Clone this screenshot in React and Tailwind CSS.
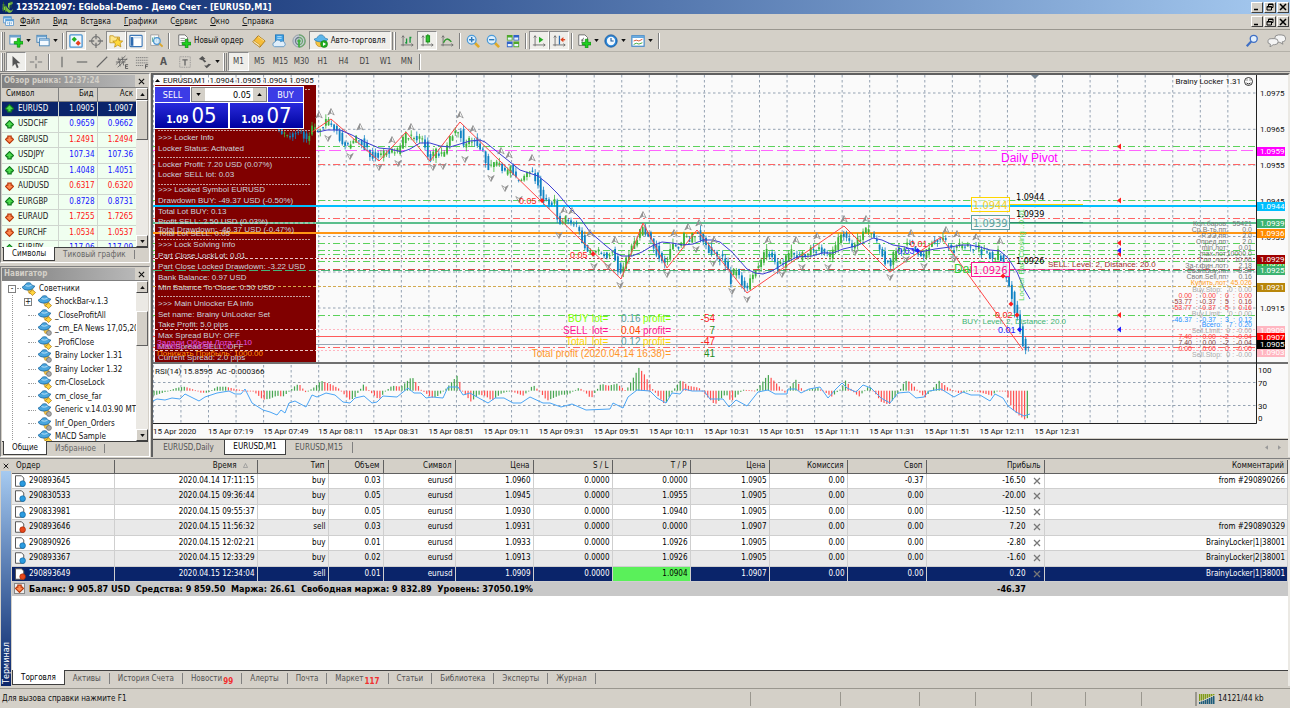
import { useState } from "react";

const quotes = [
  ["EURUSD", "1.0905", "1.0907", true],
  ["USDCHF", "0.9659", "0.9662", true],
  ["GBPUSD", "1.2491", "1.2494", false],
  ["USDJPY", "107.34", "107.36", true],
  ["USDCAD", "1.4048", "1.4051", true],
  ["AUDUSD", "0.6317", "0.6320", false],
  ["EURGBP", "0.8728", "0.8731", true],
  ["EURAUD", "1.7255", "1.7265", false],
  ["EURCHF", "1.0534", "1.0537", false],
  ["EURJPY", "117.06", "117.09", true],
];

const experts = [
  ["ShockBar-v.1.3", true],
  ["_CloseProfitAll", true],
  ["_cm_EA News 17,05,2016", false],
  ["_ProfiClose", true],
  ["Brainy Locker 1.31", false],
  ["Brainy Locker 1.32", false],
  ["cm-CloseLock", true],
  ["cm_close_far", true],
  ["Generic v.14.03.90 MTF", false],
  ["Inf_Open_Orders", false],
  ["MACD Sample", true],
];

const orders = [
  ["290893645", "2020.04.14 17:11:15", "buy", "0.03", "eurusd", "1.0960", "0.0000", "0.0000", "1.0905", "0.00", "-0.37", "-16.50", "from #290890266"],
  ["290830533", "2020.04.15 09:36:44", "buy", "0.05", "eurusd", "1.0945", "0.0000", "1.0955", "1.0905", "0.00", "0.00", "-20.00", ""],
  ["290833981", "2020.04.15 09:55:37", "buy", "0.05", "eurusd", "1.0930", "0.0000", "1.0940", "1.0905", "0.00", "0.00", "-12.50", ""],
  ["290893646", "2020.04.15 11:56:32", "sell", "0.03", "eurusd", "1.0931", "0.0000", "0.0000", "1.0907", "0.00", "0.00", "7.20", "from #290890329"],
  ["290890926", "2020.04.15 12:02:21", "buy", "0.01", "eurusd", "1.0933", "0.0000", "1.0926", "1.0905", "0.00", "0.00", "-2.80", "BrainyLocker|1|38001"],
  ["290893367", "2020.04.15 12:33:29", "buy", "0.02", "eurusd", "1.0913", "0.0000", "1.0926", "1.0905", "0.00", "0.00", "-1.60", "BrainyLocker|2|38001"],
  ["290893649", "2020.04.15 12:34:04", "sell", "0.01", "eurusd", "1.0909", "0.0000", "1.0904", "1.0907", "0.00", "0.00", "0.20", "BrainyLocker|1|38001"],
];

const columns = [
  ["Ордер", "w-[102px]"],
  ["Время", "w-[143px]"],
  ["Тип", "w-[71px]"],
  ["Объем", "w-[55px]"],
  ["Символ", "w-[72px]"],
  ["Цена", "w-[78px]"],
  ["S / L", "w-[79px]"],
  ["T / P", "w-[78px]"],
  ["Цена", "w-[79px]"],
  ["Комиссия", "w-[78px]"],
  ["Своп", "w-[79px]"],
  ["Прибыль", "w-[118px]"],
  ["Комментарий", ""],
];

const terminalTabs = [
  ["Торговля"],
  ["Активы"],
  ["История Счета"],
  ["Новости", "99"],
  ["Алерты"],
  ["Почта"],
  ["Маркет", "117"],
  ["Статьи"],
  ["Библиотека"],
  ["Эксперты"],
  ["Журнал"],
];

/* ---------- icons ---------- */

function Icon({ children, className = "size-[14px]" }) {
  return (
    <svg viewBox="0 0 16 16" className={`${className} shrink-0`} fill="none" aria-hidden="true">
      {children}
    </svg>
  );
}

const Plus = ({ x = 6, y = 6 }) => (
  <path
    transform={`translate(${x} ${y})`}
    d="M3.5 0h3v3.5H10v3H6.5V10h-3V6.5H0v-3h3.5z"
    fill="#1fcf1f"
    stroke="#0b8a0b"
    strokeWidth=".8"
  />
);

const Axes = () => (
  <path d="M3.5 2v12M1 12.5h14M2 4l1.5-2L5 4M13 11l2 1.5-2 1.5" stroke="#6b6b6b" />
);

const icons = {
  newChart: (
    <>
      <rect x="1" y="1.5" width="12" height="10" fill="#fff" stroke="#4b86b8" />
      <path d="M1 3h12" stroke="#6da3cf" strokeWidth="2" />
      <Plus x={6} y={5} />
    </>
  ),
  profiles: (
    <>
      <rect x="1" y="1.5" width="11" height="8" fill="#dcecf8" stroke="#4380b4" />
      <rect x="4" y="5.5" width="11" height="8" fill="#f4faff" stroke="#4380b4" />
      <path d="M4 7h11M1 3h11" stroke="#6da3cf" strokeWidth="1.5" />
    </>
  ),
  market: (
    <>
      <rect x="1" y="1" width="14" height="14" rx="1" fill="#eef7ff" stroke="#4a93d0" strokeWidth="1.5" />
      <path d="M6 3 9 6 6 9 3 6z" fill="#20b020" />
      <path d="M10.5 7.5 13.5 10.5 10.5 13.5 7.5 10.5z" fill="#e8401c" />
    </>
  ),
  target: (
    <>
      <circle cx="8" cy="8" r="5" stroke="#777" strokeWidth="1.5" />
      <path d="M8 0v6M8 10v6M0 8h6M10 8h6" stroke="#777" strokeWidth="1.5" />
    </>
  ),
  favorite: (
    <>
      <path d="M1 2h4l1 1.5h6V10H1z" fill="#ffe78a" stroke="#c79a2a" />
      <path d="m10 4 1.700 3.700 4 .4-3 2.700.9 4-3.600-2.100L6.400 15l.9-4-3-2.800 4-.4z" fill="#ffd83a" stroke="#b8860b" strokeWidth=".8" />
    </>
  ),
  panel: (
    <>
      <rect x="1" y="1.5" width="14" height="13" rx="1" fill="#fff" stroke="#3d78b8" strokeWidth="1.3" />
      <path d="M3.5 3.5v10" stroke="#2d6bb0" strokeWidth="3" />
      <path d="M5 4h9" stroke="#c9dcef" strokeWidth="2" />
    </>
  ),
  tester: (
    <>
      <path d="M2 1h9v12H2z" fill="#fff" stroke="#999" />
      <path d="M4 4v5M6 3v7M8.5 5v4" stroke="#5a9" />
      <circle cx="9" cy="8" r="3.8" fill="#cfe8fb" fillOpacity=".8" stroke="#4a93d0" strokeWidth="1.3" />
      <path d="m12 11 3.5 3.5" stroke="#d9a52b" strokeWidth="2.2" />
    </>
  ),
  order: (
    <>
      <path d="M2 1h7l3 3v9H2z" fill="#fff" stroke="#666" />
      <path d="M4 5h5M4 7.5h5M4 10h3" stroke="#888" />
      <Plus x={6} y={6} />
    </>
  ),
  book: (
    <>
      <path d="m1 9 6-7 8 6-6 7z" fill="#f6bd3a" stroke="#a87310" />
      <path d="m1 9 8 6v-2.5L2 7.5z" fill="#fff1c0" stroke="#a87310" strokeWidth=".6" />
      <path d="m7 3 7 5" stroke="#ffe08a" />
    </>
  ),
  cloud: (
    <>
      <rect x="4" y="1" width="9" height="8" fill="#3fa2e6" stroke="#1f78bb" />
      <path d="M6 3h5M6 5h5" stroke="#bfe2fa" />
      <path d="M3 14.5a2.7 2.7 0 0 1 .4-5.3 3.5 3.5 0 0 1 6.4-.4 2.9 2.9 0 0 1 3.7 5.7z" fill="#dfeefa" stroke="#5c93c0" />
    </>
  ),
  signal: (
    <>
      <circle cx="8" cy="8" r="7" fill="#c4ccd4" stroke="#8a96a2" />
      <path d="M8 4a4 4 0 1 0 0 8" stroke="#6c7a89" strokeWidth="1.5" />
      <path d="M8 1a7 7 0 1 1 0 14M8 4a4 4 0 0 1 0 8" stroke="#6fa66f" strokeWidth="1.5" />
      <circle cx="8" cy="8" r="2" fill="#3fae3f" />
      <path d="M8 8v7" stroke="#3fae3f" strokeWidth="2" />
    </>
  ),
  auto: (
    <>
      <ellipse cx="7" cy="9.5" rx="5" ry="5" fill="#f4c542" stroke="#a87310" strokeWidth=".6" />
      <path d="M0 6c2-1 3-1 4-2 1-4 7-4 8 0 1 1 2 1 4 2-3 4-13 4-16 0z" fill="#5cb6ea" stroke="#2277b0" strokeWidth=".8" />
      <circle cx="11.5" cy="11.5" r="4" fill="#22ad22" stroke="#0b7a0b" strokeWidth=".6" />
      <path d="m10.3 9.3 3.4 2.2-3.4 2.2z" fill="#fff" />
    </>
  ),
  bars: (
    <>
      <Axes />
      <path d="M7.5 5v6M11.5 3v7M6 10h1.5M11.5 4H13" stroke="#16963a" strokeWidth="1.5" />
    </>
  ),
  candles: (
    <>
      <Axes />
      <path d="M9 0v11" stroke="#0d8a0d" />
      <rect x="7" y="2" width="4" height="7" fill="#2fc02f" stroke="#0d8a0d" />
    </>
  ),
  line: (
    <>
      <Axes />
      <path d="M4 10c2-5 5-6 9-1" stroke="#2b962b" strokeWidth="1.5" />
    </>
  ),
  zoomIn: (
    <>
      <path d="m10 10 5 5" stroke="#e0aa28" strokeWidth="3" />
      <circle cx="6.5" cy="6.5" r="5" fill="#dff0fd" stroke="#4d9bd8" strokeWidth="1.5" />
      <path d="M3.5 6.5h6M6.5 3.5v6" stroke="#2b78ba" strokeWidth="1.6" />
    </>
  ),
  zoomOut: (
    <>
      <path d="m10 10 5 5" stroke="#e0aa28" strokeWidth="3" />
      <circle cx="6.5" cy="6.5" r="5" fill="#dff0fd" stroke="#4d9bd8" strokeWidth="1.5" />
      <path d="M3.5 6.5h6" stroke="#2b78ba" strokeWidth="1.6" />
    </>
  ),
  tiles: (
    <>
      <path d="M1 1h6.5v6.5H1zM8.5 8.5H15V15H8.5z" fill="#4fa82a" />
      <path d="M8.5 1H15v6.5H8.5zM1 8.5h6.5V15H1z" fill="#2f62c8" />
      <path d="M2 4h4.5v2.5H2zM9.5 4H14v2.5H9.5zM2 11.5h4.5V14H2zM9.5 11.5H14V14H9.5z" fill="#e9f4ff" />
    </>
  ),
  scroll: (
    <>
      <Axes />
      <path d="m8 3 5 3.5L8 10z" fill="#22ad22" />
    </>
  ),
  shift: (
    <>
      <Axes />
      <path d="M8.5 2v10" stroke="#2b6cb0" strokeWidth="1.4" />
      <path d="M9.5 6.5 13 3.5v6z" fill="#e0401c" />
      <path d="M12 6.5h3" stroke="#e0401c" strokeWidth="1.5" />
    </>
  ),
  indicators: (
    <>
      <path d="M2 1h7l3 3v9H2z" fill="#fff" stroke="#666" />
      <path d="M5 10c1 1 1-6 3-5M4.5 7h3" stroke="#555" />
      <Plus x={6} y={6} />
    </>
  ),
  clock: (
    <>
      <circle cx="8" cy="8" r="7" fill="#2a86d8" stroke="#14559a" />
      <circle cx="8" cy="8" r="4.8" fill="#f2f9ff" />
      <path d="M8 4.5V8h3" stroke="#14559a" strokeWidth="1.2" />
    </>
  ),
  template: (
    <>
      <rect x="1" y="2" width="14" height="12" fill="#fff" stroke="#3d86c8" strokeWidth="1.3" />
      <path d="M1 3.5h14" stroke="#5aa2dc" strokeWidth="2" />
      <path d="m3 8 3-1 3 1 4-2" stroke="#d04020" />
      <path d="m3 12 3-1.5 3 1 4-1.5" stroke="#2ca02c" />
    </>
  ),
  cursor: <path d="M4 1v12l3-3 2 5 2-1-2-4.5h4z" fill="#555" />,
  cross: <path d="M8 1v5M8 10v5M1 8h5M10 8h5" stroke="#777" strokeWidth="1.3" />,
  vline: <path d="M8 2v12" stroke="#666" strokeWidth="1.3" />,
  hline: <path d="M2 8h12" stroke="#666" strokeWidth="1.3" />,
  trend: <path d="M2 14 14 2" stroke="#666" strokeWidth="1.3" />,
  channel: (
    <>
      <path d="M1 11 12 1M3 14 14 4M1 8h11M3 5h11M4 3l2 10M8 2l2 10" stroke="#666" />
      <path d="M12 11h3M12 11v4.5h3M12 13h2.5" stroke="#555" />
    </>
  ),
  fibo: (
    <>
      <path d="M1 3h14M1 6h14M1 9h14M1 12h9" stroke="#777" strokeDasharray="1.5 .7" />
      <path d="M12 11h3M12 11v4.5M12 13h2.5" stroke="#555" />
    </>
  ),
  label: (
    <>
      <rect x="2" y="2" width="12" height="12" stroke="#888" strokeDasharray="1 1" />
      <path d="M5 5.5h6M8 5.5V12" stroke="#666" strokeWidth="1.5" />
    </>
  ),
  arrows: (
    <>
      <path d="M5 1 8.5 4.5h-2l3 3-2 1-3-3V6L1 4.5z" fill="#555" />
      <path d="m7 12 3 3 5-4.5-3-.5-2 2z" fill="#555" />
    </>
  ),
  mdi: (
    <>
      <rect x="1" y="1" width="11" height="9" fill="#e6f3ff" stroke="#3d86c8" />
      <rect x="4" y="5" width="11" height="9" fill="#fff" stroke="#3d86c8" />
      <path d="M4 6.5h11M1 2.5h11" stroke="#5aa2dc" strokeWidth="2" />
      <path d="M7 9v3M9.5 8.5V13M12 9v3" stroke="#3d86c8" />
    </>
  ),
  logo: (
    <>
      <path d="M1 9c4-4 6 0 8 2 3 3 4 2 6-1-1 5-4 7-7 5-3-3-4-4-7-2z" fill="#7fc241" />
      <path d="M1 4h2v7H1zM4 7h2v7H4zM8 8V3l6-2v3l-4 2v5z" fill="#8fd14f" />
      <path d="M2 1v13M5 5v10M12 0v9" stroke="#2a6a1c" />
    </>
  ),
  search: (
    <>
      <circle cx="10" cy="5.5" r="4" fill="#e2effc" stroke="#3f6fc4" strokeWidth="1.5" />
      <path d="M7 8.5 2 14" stroke="#3f6fc4" strokeWidth="2.5" />
    </>
  ),
};

const Caret = () => (
  <svg viewBox="0 0 6 4" className="h-[3px] w-[5px]" aria-hidden="true">
    <path d="M0 0h6L3 4z" fill="currentColor" />
  </svg>
);

const Quote = ({ up }) => (
  <Icon className="size-[9px]">
    {up ? (
      <path d="M8 1 15 8l-2 2.5h-2V14H5v-3.5H3L1 8z" fill="#4fdc4f" stroke="#0d7a1c" strokeWidth="2" />
    ) : (
      <path d="M8 15 1 8l2-2.5h2V2h6v3.5h2L15 8z" fill="#ff8a50" stroke="#b8380c" strokeWidth="2" />
    )}
  </Icon>
);

const ExpertIcon = ({ active = true }) => (
  <Icon>
    <path d="m6 8 6-1 1 5-5 1z" fill="#f4c542" stroke="#a87310" strokeWidth=".5" />
    <path d="M0 6c1.5-1 2.5-1.5 3.5-2.5C4.5 0 10 0 11 3c1 1 2 1.5 3.5 1.5C13 10 3 11 0 6z" fill="#4aa6de" stroke="#14609a" strokeWidth=".9" />
    <path d="M4 4c2 1 5 1 7-.5" stroke="#c9e8fb" />
    {active ? (
      <path d="m12 9 3.5 3-3.5 3.5L8.5 12z" fill="#ffd640" stroke="#a87310" strokeWidth=".8" />
    ) : (
      <circle cx="12.5" cy="12.5" r="2.8" fill="#aaa" stroke="#666" strokeWidth=".8" />
    )}
  </Icon>
);

const OrderIcon = ({ sell }) => (
  <Icon className="size-[12px]">
    <path d="M2 1h8l3 3v11H2z" fill="#fff" stroke="#555" strokeWidth="1.3" />
    <circle cx="11.5" cy="11.5" r="3.8" fill={sell ? "#e8481c" : "#2a9be0"} stroke={sell ? "#982400" : "#0f5f98"} strokeWidth=".8" />
  </Icon>
);

const CrossMark = ({ className = "size-[8px]" }) => (
  <Icon className={className}>
    <path d="m2 2 12 12M14 2 2 14" stroke="currentColor" strokeWidth="2.5" />
  </Icon>
);

/* ---------- toolbars ---------- */

const Sep = () => <span className="mx-[2px] h-[16px] w-[2px] shrink-0 border-l border-[#808080] border-r border-r-white" />;

const Handle = () => (
  <span className="mx-px flex h-[18px] w-[4px] shrink-0 gap-px">
    <i className="w-[2px] border-r border-[#808080] bg-white" />
    <i className="w-[2px] border-r border-[#808080] bg-white" />
  </span>
);

function Tool({ name, label, pressed, caret, text }) {
  return (
    <button
      type="button"
      aria-label={label}
      title={label}
      className={`flex h-[19px] shrink-0 items-center justify-center gap-[3px] border ${
        caret ? "w-[27px]" : text ? "px-[4px]" : "w-[20px]"
      } ${pressed ? "border-[#8a8a8a] border-r-white border-b-white bg-[#efeeea]" : "border-transparent"}`}
    >
      {name && <Icon>{icons[name]}</Icon>}
      {text && <span>{text}</span>}
      {caret && <Caret />}
    </button>
  );
}

function WindowButtons() {
  return (
    <div className="flex gap-px pr-px">
      {["Свернуть", "Восстановить", "Закрыть"].map((name, i) => (
        <button
          key={name}
          type="button"
          aria-label={name}
          className="flex h-[11px] w-[12px] items-center justify-center border border-white border-r-[#404040] border-b-[#404040] bg-[#d4d0c8] text-black"
        >
          <Icon className="size-[8px]">
            {i === 0 && <path d="M2 13h8" stroke="#000" strokeWidth="3" />}
            {i === 1 && <path d="M5 6V2h9v7h-3M5 3h9M2 7h9v7H2zM2 8h9" stroke="#000" strokeWidth="2" />}
            {i === 2 && <path d="m2 2 12 12M14 2 2 14" stroke="#000" strokeWidth="3" />}
          </Icon>
        </button>
      ))}
    </div>
  );
}

function MenuBar() {
  const menu = [
    ["", "Ф", "айл"],
    ["", "В", "ид"],
    ["Вст", "а", "вка"],
    ["", "Г", "рафики"],
    ["С", "е", "рвис"],
    ["", "О", "кно"],
    ["", "С", "правка"],
  ];
  return (
    <nav className="flex h-[16px] items-center border-b border-[#9a978f] pl-[3px]">
      <Icon className="size-[11px]">{icons.mdi}</Icon>
      <div className="flex flex-1 gap-[13px] pl-[6px]">
        {menu.map(([a, u, b]) => (
          <button key={a + u + b} type="button" className="leading-[12px]">
            {a}
            <u>{u}</u>
            {b}
          </button>
        ))}
      </div>
      <WindowButtons />
    </nav>
  );
}

function Toolbars() {
  const [frame, setFrame] = useState("M1");
  return (
    <div className="border-b border-[#808080]">
      <div className="flex h-[21px] items-center">
        <Handle />
        <Tool name="newChart" label="Новый график" caret />
        <Tool name="profiles" label="Профили" caret />
        <Sep />
        <Tool name="market" label="Обзор рынка" pressed />
        <Tool name="target" label="Окно данных" />
        <Tool name="favorite" label="Навигатор" pressed />
        <Tool name="panel" label="Терминал" pressed />
        <Tool name="tester" label="Тестер стратегий" />
        <Sep />
        <Tool name="order" text="Новый ордер" label="Новый ордер" />
        <Tool name="book" label="MetaEditor" />
        <Tool name="cloud" label="Облако" />
        <Tool name="signal" label="Сигналы" />
        <Tool name="auto" text="Авто-торговля" label="Авто-торговля" pressed />
        <Handle />
        <Tool name="bars" label="Бары" />
        <Tool name="candles" label="Свечи" pressed />
        <Tool name="line" label="Линия" />
        <Sep />
        <Tool name="zoomIn" label="Увеличить" />
        <Tool name="zoomOut" label="Уменьшить" />
        <Tool name="tiles" label="Окна мозаикой" />
        <Sep />
        <Tool name="scroll" label="Автопрокрутка" pressed />
        <Tool name="shift" label="Сдвиг графика" pressed />
        <Sep />
        <Tool name="indicators" label="Индикаторы" caret />
        <Tool name="clock" label="Периоды" caret />
        <Tool name="template" label="Шаблоны" caret />
        <Sep />
        <div className="flex flex-1 items-center justify-end gap-[8px] pr-[4px]">
          <button type="button" aria-label="Поиск">
            <Icon>{icons.search}</Icon>
          </button>
          <button type="button" aria-label="Чат">
            <svg viewBox="0 0 20 14" className="h-[13px] w-[19px]" fill="#f4f4f4" stroke="#888" aria-hidden="true">
              <path d="M12 1h3a4 3.5 0 0 1 1 7.5L17 11l-3.5-2H12a4 4 0 0 1 0-8z" />
              <path d="M5 5h3a3.5 3 0 0 1 0 6.5H6.5L3 14l.5-3A3.5 3 0 0 1 5 5z" />
            </svg>
          </button>
        </div>
      </div>
      <div className="flex h-[20px] items-center border-t border-[#b4b1a9]">
        <Handle />
        <Tool name="cursor" label="Курсор" pressed />
        <Tool name="cross" label="Перекрестие" />
        <Sep />
        <Tool name="vline" label="Вертикальная линия" />
        <Tool name="hline" label="Горизонтальная линия" />
        <Tool name="trend" label="Трендовая линия" />
        <Tool name="channel" label="Канал" />
        <Tool name="fibo" label="Фибоначчи" />
        <button type="button" className="w-[23px] text-[10px] font-bold text-[#555]">
          A
        </button>
        <Tool name="label" label="Текстовая метка" />
        <Tool name="arrows" label="Стрелки" caret />
        <Handle />
        {["M1", "M5", "M15", "M30", "H1", "H4", "D1", "W1", "MN"].map((f) => (
          <button
            key={f}
            type="button"
            onClick={() => setFrame(f)}
            className={`h-[19px] w-[21px] border text-[#444] ${
              f === frame ? "border-[#8a8a8a] border-r-white border-b-white bg-[#efeeea]" : "border-transparent"
            }`}
          >
            {f}
          </button>
        ))}
        <Sep />
      </div>
    </div>
  );
}

/* ---------- left panels ---------- */

function PanelTitle({ children }) {
  return (
    <div className="flex h-[12px] items-center justify-between">
      <h2 className="flex-1 bg-linear-to-r from-[#808080] to-[#b8b8b8] pl-[2px] leading-[12px] font-bold text-[#d4d0c8]">
        {children}
      </h2>
      <button type="button" aria-label="Закрыть" className="px-[3px]">
        <CrossMark className="size-[7px]" />
      </button>
    </div>
  );
}

function ScrollBar({ thumb }) {
  return (
    <div className="flex w-[12px] shrink-0 flex-col bg-[#ebe9e4]">
      <button type="button" aria-label="Вверх" className="flex h-[12px] items-center justify-center border border-white border-r-[#404040] border-b-[#404040] bg-[#d4d0c8]">
        <span className="rotate-180">
          <Caret />
        </span>
      </button>
      <div className="flex flex-1 flex-col">
        <div className={thumb} />
      </div>
      <button type="button" aria-label="Вниз" className="flex h-[12px] items-center justify-center border border-white border-r-[#404040] border-b-[#404040] bg-[#d4d0c8]">
        <Caret />
      </button>
    </div>
  );
}

function PanelTabs({ items }) {
  return (
    <div className="flex h-[14px] border-t border-[#404040] pl-px leading-[12px]">
      {items.map((t, i) => (
        <button
          key={t}
          type="button"
          className={
            i === 0
              ? "-mt-px border border-t-0 border-[#404040] bg-white px-[8px]"
              : "my-[2px] border-r border-[#808080] px-[8px] leading-[9px] text-[#666]"
          }
        >
          {t}
        </button>
      ))}
    </div>
  );
}

function MarketWatch() {
  return (
    <section className="border border-[#808080] border-r-white border-b-white p-px">
      <PanelTitle>Обзор рынка: 12:37:24</PanelTitle>
      <div className="flex h-[160px] overflow-hidden border-t border-[#808080] bg-white">
        <div className="flex-1 overflow-hidden">
          <table className="w-full table-fixed border-collapse text-right">
            <thead>
              <tr className="h-[13px] bg-[#d4d0c8]">
                <th className="w-[56px] border-r border-b border-[#808080] pl-[4px] text-left font-normal">Символ</th>
                <th className="border-r border-b border-[#808080] pr-[3px] font-normal">Бид</th>
                <th className="border-b border-[#808080] pr-[3px] font-normal">Аск</th>
              </tr>
            </thead>
            <tbody>
              {quotes.map(([name, bid, ask, up], i) => (
                <tr
                  key={name}
                  className={`odd:h-[15px] even:h-[16px] ${
                    i === 0 ? "bg-[#0a246a] text-white" : up ? "bg-[#f0fff0] text-[#1414ff]" : "bg-[#f0fff0] text-[#ff1414]"
                  }`}
                >
                  <td className={`border-r border-b border-[#cfd6cf] pl-[3px] text-left ${i === 0 ? "" : "text-[#202020]"}`}>
                    <span className="flex items-center gap-[4px]">
                      <Quote up={up} />
                      {name}
                    </span>
                  </td>
                  <td className="border-r border-b border-[#cfd6cf] pr-[2px]">{bid}</td>
                  <td className="border-b border-[#cfd6cf] pr-[3px]">{ask}</td>
                </tr>
              ))}
            </tbody>
          </table>
        </div>
        <ScrollBar thumb="h-[40px] border border-white border-r-[#606060] border-b-[#606060] bg-[#d4d0c8]" />
      </div>
      <PanelTabs items={["Символы", "Тиковый график"]} />
    </section>
  );
}

function Navigator() {
  return (
    <section className="border border-[#808080] border-r-white border-b-white p-px">
      <PanelTitle>Навигатор</PanelTitle>
      <div className="flex h-[161px] overflow-hidden border-t border-[#808080] bg-white">
        <div className="flex-1 overflow-hidden pt-px pl-[6px] whitespace-nowrap">
          <div className="flex h-[13px] items-center">
            <span className="flex size-[8px] items-center justify-center border border-[#808080] leading-none">-</span>
            <span className="mx-px w-[4px] border-t border-dotted border-[#999]" />
            <ExpertIcon />
            <span className="pl-[3px]">Советники</span>
          </div>
          <ul className="ml-[4px] border-l border-dotted border-[#999] pl-[11px]">
            {experts.map(([name, active], i) => (
              <li key={name} className="flex items-center odd:h-[14px] even:h-[13px]">
                <span className="w-[14px] shrink-0">
                  {i === 0 ? (
                    <span className="flex size-[8px] items-center justify-center border border-[#808080] leading-none">+</span>
                  ) : (
                    <span className="ml-[4px] block w-[8px] border-t border-dotted border-[#999]" />
                  )}
                </span>
                <ExpertIcon active={active} />
                <span className="pl-[3px]">{name}</span>
              </li>
            ))}
          </ul>
        </div>
        <ScrollBar thumb="mt-[18px] h-[35px] border border-white border-r-[#606060] border-b-[#606060] bg-[#d4d0c8]" />
      </div>
      <PanelTabs items={["Общие", "Избранное"]} />
    </section>
  );
}

/* ---------- chart ---------- */

const STEP = 2.755;

const pricePath = [
  [279, 128], [285, 134], [300, 132], [307, 140], [312, 130], [318, 129], [330, 121], [338, 133], [348, 148],
  [360, 137], [370, 153], [379, 158], [390, 150], [398, 153], [407, 135], [417, 139], [424, 141], [430, 158],
  [437, 153], [443, 155], [448, 143], [457, 127], [461, 130], [464, 150], [473, 138], [483, 150], [490, 168],
  [497, 160], [505, 175], [510, 167], [519, 182], [532, 170], [538, 180], [543, 200], [556, 203], [558, 223],
  [565, 220], [573, 223], [580, 230], [587, 253], [600, 252], [607, 257], [613, 250], [620, 271], [622, 276],
  [627, 257], [637, 240], [643, 227], [650, 235], [657, 250], [666, 265], [673, 243], [680, 248], [685, 235],
  [690, 240], [698, 232], [703, 238], [710, 252], [725, 260], [732, 281], [736, 268], [747, 288], [753, 275],
  [768, 250], [778, 265], [783, 265], [792, 252], [800, 258], [817, 247], [828, 258], [835, 250], [843, 232],
  [852, 247], [860, 240], [865, 230], [873, 235], [883, 255], [890, 266], [897, 252], [910, 243], [923, 257],
  [932, 243], [942, 240], [950, 247], [953, 252], [958, 245], [965, 247], [977, 247], [990, 255], [995, 260],
  [1000, 252], [1005, 267], [1008, 283], [1013, 297], [1018, 317], [1021, 333], [1024, 347], [1030, 347],
];

// AC histogram heights, positive is above zero
const acPath = [
  [153, -5], [157, -4], [166, -1], [177, 3], [185, 4], [194, 1], [201, -2], [208, -2], [217, 4], [226, 4], [234, 2],
  [245, 0], [254, -1], [263, -9], [270, -8], [277, -5], [283, -6], [289, -1], [294, 4], [299, 7], [306, -2],
  [315, 4], [321, 10], [332, 6], [339, 2], [349, -9], [354, -8], [364, 7], [370, -1], [379, -9], [385, -1],
  [392, 5], [401, 4], [412, 14], [421, 1], [432, -7], [437, -6], [446, 2], [458, 16], [462, 0], [471, -11],
  [479, -4], [485, -5], [492, -10], [501, -3], [510, 0], [523, -5], [528, -1], [533, 6], [539, 0], [547, -10],
  [561, -4], [568, -4], [579, 3], [584, 0], [591, -8], [601, 7], [608, 5], [617, 7], [626, 0], [639, 23],
  [644, 17], [653, 1], [665, -14], [673, 0], [681, 11], [688, 5], [699, 3], [707, -6], [715, -14], [726, -3],
  [731, -11], [738, -4], [743, 1], [756, 0], [768, 16], [775, 9], [785, -2], [796, 11], [803, 0], [818, 3],
  [832, -6], [841, 2], [846, 11], [852, 0], [859, -6], [869, 5], [874, -1], [881, -11], [889, -14], [898, -3],
  [905, 10], [910, 9], [918, 0], [925, -7], [931, 0], [939, 10], [948, 3], [960, -3], [971, 1], [992, -5],
  [997, 0], [1006, -1], [1012, -18], [1018, -24], [1025, -29], [1028, -27], [1030, -21],
];

const rsi =
  "153,401 157,399 165,400 172,398 180,399 185,394 191,397 199,401 205,397 217,393 229,391 235,394 241,394 245,389 252,403 263,410 270,412 277,415 281,410 285,413 289,403 295,401 306,407 312,395 317,397 326,393 335,395 343,402 350,403 355,398 364,396 372,403 377,402 383,396 397,397 408,388 414,393 421,393 426,398 432,397 443,398 448,387 458,387 463,395 470,393 477,397 488,403 495,398 504,398 513,403 521,403 530,397 543,403 550,403 561,407 572,404 586,410 610,409 613,403 623,408 628,397 637,390 650,391 657,398 666,403 672,393 680,394 684,389 692,391 704,391 710,399 723,399 729,407 736,400 747,406 758,392 768,390 775,394 787,394 788,389 796,389 801,393 809,389 820,387 828,398 835,390 842,383 847,388 856,392 863,385 871,388 881,398 890,403 898,393 909,392 916,398 924,397 929,391 941,389 954,397 963,392 971,395 980,395 990,401 995,394 1003,398 1008,406 1016,412 1024,416 1030,414";

const zigzag =
  "312,132 331,119 379,161 406,132 430,161 460,122 621,279 643,223 667,268 697,230 747,293 844,226 890,272 941,237 1023,350";

const average =
  "318,132 327,130 340,130 352,135 365,142 379,148 390,149 402,152 410,149 420,143 430,143 440,146 450,147 460,144 470,141 480,140 485,142 495,150 510,162 520,170 538,176 548,184 558,194 568,206 580,218 590,232 605,245 615,253 622,256 632,256 642,252 652,246 662,242 672,243 683,245 693,244 703,240 712,240 720,242 732,252 747,269 755,273 763,274 772,271 785,263 797,257 812,256 822,253 833,253 843,249 856,246 865,242 873,238 882,240 893,245 905,247 920,252 935,249 950,247 962,245 970,245 980,247 990,250 1000,251 1008,258 1017,272 1024,289 1030,299";

const upArrows = [
  [319, 115], [331, 112], [360, 127], [392, 140], [411, 127], [460, 115], [473, 129], [501, 151], [509, 155],
  [532, 158], [564, 210], [572, 211], [590, 233], [615, 240], [643, 215], [674, 233], [688, 227], [699, 223],
  [714, 240], [768, 240], [796, 240], [817, 236], [844, 219], [866, 219], [911, 233], [946, 230], [957, 234],
  [976, 237], [1000, 241],
];

const downArrows = [
  [328, 138], [350, 156], [379, 167], [398, 163], [433, 167], [443, 166], [465, 159], [491, 178], [505, 188],
  [519, 199], [559, 235], [594, 266], [608, 266], [620, 285], [667, 274], [696, 249], [713, 263], [732, 291],
  [747, 299], [782, 274], [802, 267], [828, 267], [855, 252], [890, 277], [906, 259], [924, 266], [954, 259],
];

const DASH_DOT = "7 3 2 3";

// y, colour, dash pattern, thickness
const orderLevels = [
  [146.5, "#5ad25a", DASH_DOT, 1],
  [150.5, "#ff64ff", "12 4", 1],
  [164.5, "#ff6464", DASH_DOT, 1],
  [200.5, "#5ad25a", DASH_DOT, 1],
  [218.5, "#ff6464", DASH_DOT, 1],
  [243.5, "#5ad25a", DASH_DOT, 1],
  [250.5, "#5ad25a", DASH_DOT, 1],
  [254.5, "#5ad25a", DASH_DOT, 1],
  [258.5, "#b43c3c", "2 2", 1],
  [261.5, "#5ad25a", DASH_DOT, 1],
  [269.5, "#d24646", DASH_DOT, 1],
  [315.5, "#5ad25a", DASH_DOT, 1],
  [329.5, "#ffb6c1", "2 2", 1],
  [336.5, "#ff5a5a", null, 1],
  [344.5, "#98a6b4", null, 1],
  [347.5, "#ff6464", DASH_DOT, 1],
  [350.5, "#ffb6c1", "2 2", 1],
];

const mainLevels = [
  [206, "#00bfff", null, 2],
  [223, "#5abe8c", null, 2],
  [233, "#ff9614", null, 2],
  [270.5, "#46b478", "9 3", 1],
  [286.5, "#d2aa50", "3 2", 1],
];

const tags = [
  [151, "1.0959", "#ff00ff"],
  [206, "1.0944", "#00bfff"],
  [223, "1.0939", "#3cb371"],
  [233, "1.0936", "#ff8c00"],
  [265, "1.0930", "#32b432"],
  [259, "1.0929", "#a00000"],
  [270, "1.0925", "#3cb371"],
  [287, "1.0921", "#b8860b"],
  [330, "1.0909", "#ffb6c1"],
  [352, "1.0903", "#ffb6c1"],
  [337, "1.0907", "#ff0000"],
  [344, "1.0905", "#000000"],
];

const lockerLines = [
  [137, ">>> Locker Info"],
  [148, "Locker Status: Activated"],
  [164, "Locker Profit: 7.20 USD (0.07%)"],
  [174, "Locker SELL lot: 0.03"],
  [189, ">>> Locked Symbol EURUSD"],
  [200, "Drawdown BUY: -49.37 USD (-0.50%)"],
  [211, "Total Lot BUY: 0.13"],
  [221, "Profit SELL: 2.50 USD (0.03%)"],
  [229, "Total Drawdown: -46.37 USD (-0.47%)"],
  [233, "Total Lot SELL: 0.05"],
  [244, ">>> Lock Solving Info"],
  [255, "Part Close LockLot: 0.01"],
  [266, "Part Close Locked Drawdown: -3.22 USD"],
  [277, "Bank Balance: 0.97 USD"],
  [287, "Min Balance To Close: 0.50 USD"],
  [303, ">>> Main Unlocker EA Info"],
  [314, "Set name: Brainy UnLocker Set"],
  [324, "Take Profit: 5.0 pips"],
  [335, "Max Spread BUY: OFF"],
  [346, "Max Spread SELL: OFF"],
  [357, "Current Spread: 2.0 pips"],
];

const info = [
  [223, "#777", ["Кол.баров:", "55421"]],
  [229, "#777", ["Ср.В-ть,пп:", "0.0"]],
  [235, "#777", ["Р.ЭЭ,пп:", "2.0"]],
  [241, "#777", ["Спред,пп:", "2.0"]],
  [247, "#777", ["min.лот:", "0.01"]],
  [253, "#777", ["max.лот:", "10000.0"]],
  [259, "#777", ["Т.пп.,лот:", "10.00"]],
  [265, "#777", ["За-г.фин.лот:", "2.18"]],
  [270, "#777", ["Своп.Buy,пп:", "-0.34"]],
  [276, "#777", ["Своп.Sell,пп:", "0.16"]],
  [282, "#ffa01e", ["Купить,лот:", "45.026"]],
  [289, "#aaa", ["Buy.Stop:", "0 : 0.00"]],
  [295, "#ff3c3c", ["0.00", ":", "0.00", ":", "0", ":", "0.00"]],
  [301, "#a03c3c", ["-53.77", ":", "-0.37", ":", "5", ":", "0.16"]],
  [307, "#ff3c3c", ["-53.77", ":", "-0.37", ":", "5", ":", "0.16"]],
  [313, "#aaa", ["Buy.Limit:", "0 : 0.00"]],
  [319, "#1e90ff", ["-46.37", ":", "-0.37", ":", "3", ":", "0.12"]],
  [324, "#1e90ff", ["Всего:", "7 : 0.20"]],
  [330, "#aaa", ["Sell.Limit:", "0 : -0.00"]],
  [336, "#ff3c3c", ["7.40", ":", "0.00", ":", "-2", ":", "-0.04"]],
  [342, "#803c3c", ["7.40", ":", "0.00", ":", "-2", ":", "-0.04"]],
  [348, "#ff3c3c", ["0.00", ":", "0.00", ":", "0", ":", "-0.00"]],
  [354, "#aaa", ["Sell.Stop:", "0 : -0.00"]],
];

const times = [
  "15 Apr 2020", "15 Apr 07:19", "15 Apr 07:49", "15 Apr 08:11", "15 Apr 08:31", "15 Apr 08:51", "15 Apr 09:11",
  "15 Apr 09:31", "15 Apr 09:51", "15 Apr 10:11", "15 Apr 10:31", "15 Apr 10:51", "15 Apr 11:11", "15 Apr 11:31",
  "15 Apr 11:51", "15 Apr 12:11", "15 Apr 12:31",
];

function sample(points, x) {
  const i = points.findIndex((p) => p[0] >= x);
  if (i <= 0) return points[i === 0 ? 0 : points.length - 1][1];
  const [x0, y0] = points[i - 1];
  const [x1, y1] = points[i];
  return y0 + ((y1 - y0) * (x - x0)) / (x1 - x0);
}

// stable pseudo random in 0..1
const noise = (n) => {
  const s = Math.sin(n * 127.1) * 43758.5453;
  return s - Math.floor(s);
};

const candles = [];
for (let x = 279, n = 0; x <= 1030; x += STEP, n++) {
  const open = sample(pricePath, x - STEP) + (noise(n) - 0.5) * 6;
  const close = sample(pricePath, x + STEP / 2) + (noise(n + 0.5) - 0.5) * 9;
  const top = Math.min(open, close);
  const bottom = Math.max(open, close, top + 1);
  candles.push({
    x,
    top,
    bottom,
    high: top - noise(n + 7) * 5,
    low: bottom + noise(n + 9) * 5,
    up: close < open,
  });
}

const acBars = [];
for (let x = 154; x <= 1030; x += STEP) {
  const h = sample(acPath, x);
  acBars.push({ x, h, up: h >= sample(acPath, x - STEP) });
}

const Levels = ({ items }) => (
  <g fill="none">
    {items.map(([y, color, dash, w]) => (
      <path key={y} d={`M153 ${y}H1256`} stroke={color} strokeDasharray={dash ?? "none"} strokeWidth={w} />
    ))}
  </g>
);

function PriceChart() {
  const grid = Array.from({ length: 40 }, (_, i) => 153.4 + i * 27.55);
  return (
    <svg
      viewBox="153 75 1135 363"
      className="block w-full font-[Roboto,'DejaVu_Sans',sans-serif] text-[8px]"
      role="img"
      aria-label="EURUSD,M1"
    >
      <rect x="153" y="75" width="1135" height="363" fill="#fafafa" />

      <g stroke="#94a2b2" strokeDasharray="2.5 2.5">
        {grid.map((x) => (
          <path key={x} d={`M${x} 75V423`} />
        ))}
        {[93, 129.3, 165, 200.5, 236.5, 272, 308, 382.5, 405.5].map((y) => (
          <path key={y} d={`M153 ${y}H1256`} />
        ))}
      </g>

      <Levels items={orderLevels} />
      <rect x="155" y="85" width="161" height="277" fill="#800000" />
      <Levels items={mainLevels} />
      <path d="M155 223h161M155 258.5h161M155 329.5h161M155 350.5h161" stroke="#e8c8c8" strokeDasharray="3 2" />

      <g>
        {candles.map((c) => (
          <g key={c.x} fill={c.up ? "#3cb43c" : "#0f82c3"} stroke={c.up ? "#3cb43c" : "#0f82c3"}>
            <path d={`M${c.x} ${c.high}V${c.low}`} strokeWidth=".8" />
            <rect x={c.x - 0.9} y={c.top} width="1.8" height={c.bottom - c.top} stroke="none" />
          </g>
        ))}
      </g>

      <polyline points={zigzag} fill="none" stroke="#ff4646" />
      <polyline points={average} fill="none" stroke="#3c3cd2" />

      <g fill="none" stroke="#909090" strokeWidth=".8">
        {upArrows.map(([x, y]) => (
          <g key={x}>
            <path d={`M${x} ${y - 3.5}l3.2 6.500-3.2-2-3.2 2z`} />
            <path d={`M${x} ${y - 3.5}v4.500l-3.2 2z`} fill="#909090" stroke="none" />
          </g>
        ))}
        {downArrows.map(([x, y]) => (
          <g key={x}>
            <path d={`M${x} ${y + 3.5}l3.2-6-3.2 2-3.2-2z`} />
            <path d={`M${x} ${y + 3.5}v-4l3.2-2z`} fill="#909090" stroke="none" />
          </g>
        ))}
      </g>

      {/* locker panel */}
      <g className="font-['Liberation_Sans',sans-serif]" fill="#ccd4dc">
        {[89, 130, 157, 184, 239, 296].map((y) => (
          <path key={y} d={`M158 ${y + 0.5}H311`} stroke="#c8a0a0" strokeDasharray="2 1" />
        ))}
        {lockerLines.map(([y, t]) => (
          <text key={y} x="158" y={y + 3}>
            {t}
          </text>
        ))}
        <text x="157" y="345" fill="#e650e6">
          Задали Объем Лота: 0.10
        </text>
        <text x="157" y="349" fill="#c83cc8">
          Баланс Объем: 0.01
        </text>
        <text x="157" y="356" fill="#ff8c00">
          Понижать Прибыль: 1000.00
        </text>
      </g>

      {/* floating labels */}
      <g className="font-['Liberation_Sans',sans-serif] text-[10px]">
        <text x="568" y="322" fill="#7fff00">BUY</text>
        <text x="592" y="322" fill="#7fff00">lot=</text>
        <text x="621" y="322" fill="#5f9ea0">0.16</text>
        <text x="643" y="322" fill="#7fff00">profit=</text>
        <text x="715" y="322" fill="#ff1e1e" textAnchor="end">-54</text>
        <text x="563" y="334" fill="#ff1493">SELL</text>
        <text x="592" y="334" fill="#ff1493">lot=</text>
        <text x="621" y="334" fill="#ff4500">0.04</text>
        <text x="643" y="334" fill="#ff1493">profit=</text>
        <text x="715" y="334" fill="#228b22" textAnchor="end">7</text>
        <text x="566" y="345" fill="#ffd700">Total</text>
        <text x="592" y="345" fill="#ffd700">lot=</text>
        <text x="621" y="345" fill="#5f9ea0">0.12</text>
        <text x="643" y="345" fill="#ffd700">profit=</text>
        <text x="715" y="345" fill="#ff1e1e" textAnchor="end">-47</text>
        <text x="671" y="357" fill="#ff9628" textAnchor="end">Total profit (2020.04.14 16:38)=</text>
        <text x="715" y="357" fill="#228b22" textAnchor="end">41</text>

        <g className="text-[9px]" fill="#ff1e1e">
          <text x="519" y="204">0.05</text>
          <text x="570" y="258">0.05</text>
          <text x="910" y="247">0.01</text>
          <text x="995" y="318">0.02</text>
          <text x="897" y="254" fill="#1e1eff">0.03</text>
          <text x="998" y="333" fill="#1e1eff">0.01</text>
        </g>
        <text x="1048" y="267" className="text-[8px]" fill="#a02828">SELL: Level: 2, Distance: 20.0</text>
        <text x="962" y="324" className="text-[8px]" fill="#3cb371">BUY: Level: 2, Distance: 20.0</text>
        <text x="1001" y="162" className="text-[12px]" fill="#ff00ff">Daily Pivot</text>
        <text x="954" y="273" className="text-[12px]" fill="#32cd32">Dai</text>
        <text transform="translate(1024 301) rotate(-90)" className="text-[8px]" fill="#50d250">
          Locker Part Closing ..0.01
        </text>
      </g>

      {/* level boxes */}
      <g className="font-['DejaVu_Sans_Condensed','DejaVu_Sans',sans-serif] text-[11px]">
        <path d="M1010 204.5h73" stroke="#ffd700" />
        <path d="M1010 222.5h73" stroke="#2e8b6e" />
        <path d="M1010 269.5h73" stroke="#ff1493" strokeWidth=".6" />
        <rect x="971.5" y="197.5" width="38" height="14" fill="#fafafa" fillOpacity=".6" stroke="#ffd700" />
        <text x="973" y="209" fill="#f0d020">1.0944</text>
        <rect x="971.5" y="215.5" width="38" height="14" fill="#fafafa" fillOpacity=".6" stroke="#5f9ea0" />
        <text x="973" y="227" fill="#5f9ea0">1.0939</text>
        <rect x="971.5" y="262.5" width="38" height="14" fill="#fafafa" fillOpacity=".8" stroke="#ff1493" />
        <text x="973" y="274" fill="#ff1493">1.0926</text>
        <g className="text-[9px]" fill="#000">
          <text x="1016" y="200">1.0944</text>
          <text x="1016" y="217">1.0939</text>
          <text x="1016" y="264">1.0926</text>
        </g>
      </g>

      <g fill="#ff1e1e">
        {[146.5, 200.5, 243, 254, 315].map((y) => (
          <path key={y} d={`M1117 ${y}l4-3v6z`} />
        ))}
        {[[542, 200.5], [593, 254], [1003, 276], [1011, 304], [1017, 315]].map(([x, y]) => (
          <path key={x} d={`M${x - 2.5} ${y}l2.5-2.5 2.5 2.5-2.5 2.5z`} />
        ))}
      </g>
      <g fill="#1e1eff">
        <path d="M1117 250.5l4-3v6zM1117 329.5l4-3v6zM915 250.5l2.5-2.5 2.5 2.5-2.5 2.5zM1017 329.5l2.5-2.5 2.5 2.5-2.5 2.5z" />
      </g>
      <path d="M1031 75h8l-4 4z" fill="#708090" />

      {/* account info column */}
      <g className="font-['Liberation_Sans',sans-serif] text-[7px]">
        {info.map(([y, color, cells]) =>
          cells.length === 2 ? (
            <g key={y} fill={color} textAnchor="end">
              <text x={cells[1].includes(":") ? 1222 : 1228} y={y + 3}>{cells[0]}</text>
              <text x="1252" y={y + 3}>{cells[1]}</text>
            </g>
          ) : (
            <g key={y} fill={color} textAnchor="end">
              {cells.map((c, i) => (
                <text key={i} x={[1192, 1198, 1216, 1222, 1229, 1235, 1252][i]} y={y + 3}>{c}</text>
              ))}
            </g>
          )
        )}
      </g>

      {/* captions */}
      <path d="M155 82l5 0-2.5-3z" fill="#000" />
      <text x="163" y="83" fill="#111">EURUSD,M1{"\u00a0\u00a0"}1.0904 1.0905 1.0904 1.0905</text>
      <text x="1241" y="84" fill="#111" textAnchor="end">Brainy Locker 1.31</text>
      <g fill="none" stroke="#222" strokeWidth=".9">
        <circle cx="1248.5" cy="81.5" r="4" />
        <path d="M1246.5 83q2 2 4 0M1247 79.5v1M1250 79.5v1" />
      </g>

      {/* indicator window */}
      <rect x="153" y="362" width="1135" height="2" fill="#707070" />
      {acBars.map((b) => (
        <rect
          key={b.x}
          x={b.x - 0.6}
          y={390.7 - Math.max(b.h, 0)}
          width="1.2"
          height={Math.max(Math.abs(b.h), 0.8)}
          fill={b.up ? "#46a550" : "#ff5050"}
        />
      ))}
      <polyline points={rsi} fill="none" stroke="#4ba5f5" />
      <text x="155" y="374" fill="#111">RSI(14) 15.8595{"\u00a0\u00a0"}AC -0.000366</text>

      {/* axes */}
      <path d="M153 423.5H1256.5V75" fill="none" stroke="#222" />
      <g fill="#111">
        {times.map((t, i) => (
          <text key={t} x={153 + i * 55.1} y="434">
            {t}
          </text>
        ))}
        {[
          [93, "1.0975"], [129, "1.0965"], [165, "1.0955"], [201, "1.0945"], [237, "1.0935"], [308, "1.0915"],
        ].map(([y, t]) => (
          <text key={t} x="1260" y={y + 3}>{t}</text>
        ))}
        <text x="1258" y="373">100</text>
        <text x="1258" y="386">70</text>
        <text x="1258" y="409">30</text>
        <text x="1258" y="421">0</text>
      </g>
      {tags.map(([y, t, color]) => (
        <g key={t}>
          <rect x="1257" y={y - 4} width="28" height="9" fill={color} />
          <text x="1260" y={y + 3} fill="#fff">{t}</text>
        </g>
      ))}
    </svg>
  );
}

function OneClick() {
  const [lot, setLot] = useState("0.05");
  return (
    <div className="absolute top-[11px] left-px flex w-[150px] flex-col gap-px bg-white p-px text-white">
      <div className="flex h-[15px] gap-px">
        <button type="button" className="flex-1 bg-[#3c3ce6] text-[9px]">SELL</button>
        <div className="flex w-[76px] border border-[#808080] bg-[#d4d0c8] text-black">
          <button type="button" aria-label="Меньше" className="flex w-[13px] items-center justify-center">
            <Caret />
          </button>
          <input
            aria-label="Объем"
            value={lot}
            onChange={(e) => setLot(e.target.value)}
            className="w-0 flex-1 bg-white pr-[2px] text-right text-[9px] outline-none"
          />
          <button type="button" aria-label="Больше" className="flex w-[13px] rotate-180 items-center justify-center">
            <Caret />
          </button>
        </div>
        <button type="button" className="flex-1 bg-[#3c3ce6] text-[9px]">BUY</button>
      </div>
      <div className="flex h-[25px] gap-[2px]">
        {["05", "07"].map((pips) => (
          <button
            key={pips}
            type="button"
            className="flex flex-1 items-end justify-center gap-[3px] bg-linear-to-b from-[#2828dc] to-[#0000a0] pb-px"
          >
            <span className="pb-px text-[10px] leading-[12px] font-bold">1.09</span>
            <span className="text-[22px] leading-[22px]">{pips}</span>
          </button>
        ))}
      </div>
    </div>
  );
}

function ChartWindow() {
  return (
    <main className="flex min-w-0 flex-1 flex-col border-t-2 border-l-2 border-[#606060] border-r-2 border-r-[#ebe9e4]">
      <div className="relative">
        <PriceChart />
        <OneClick />
      </div>
      <div className="mt-px flex h-[16px] items-center border-t border-[#404040]">
        <button type="button" className="w-[71px] text-[#555]">EURUSD,Daily</button>
        <button type="button" className="h-full w-[62px] border border-t-0 border-[#404040] bg-white leading-none text-black">
          EURUSD,M1
        </button>
        <button type="button" className="w-[67px] border-r border-[#808080] leading-[11px] text-[#555]">EURUSD,M15</button>
        <div className="flex flex-1 justify-end gap-[8px] pr-[6px] text-[#999]">
          <span className="rotate-90"><Caret /></span>
          <span className="-rotate-90"><Caret /></span>
        </div>
      </div>
    </main>
  );
}

/* ---------- terminal ---------- */

function Terminal() {
  const [tab, setTab] = useState("Торговля");
  return (
    <section className="flex flex-1 border-t border-[#808080] pt-px">
      <div className="flex w-[12px] shrink-0 flex-col items-center">
        <button type="button" aria-label="Закрыть" className="h-[11px]">
          <CrossMark className="size-[6px]" />
        </button>
        <div className="flex w-[10px] flex-1 rotate-180 items-start bg-linear-to-b from-[#0a246a] to-[#a6caf0]">
          <h2 className="pt-[2px] text-[9px] leading-[10px] text-white [writing-mode:vertical-rl]">Терминал</h2>
        </div>
      </div>
      <div className="flex min-w-0 flex-1 flex-col border-r-2 border-[#ebe9e4]">
        <div className="flex-1 bg-white">
          <table className="w-full table-fixed border-collapse text-right">
            <thead>
              <tr className="h-[13px] bg-[#d4d0c8]">
                {columns.map(([name, width], i) => (
                  <th
                    key={i}
                    className={`${width} border-r border-b border-[#606060] font-normal ${
                      i === 0 ? "pl-[4px] text-left" : "pr-[3px]"
                    }`}
                  >
                    {name}
                    {i === 1 && (
                      <svg viewBox="0 0 6 6" className="mr-[6px] ml-[6px] inline size-[5px]" fill="none" aria-hidden="true">
                        <path d="M3 .5 5.500 5.500H.5z" stroke="#999" />
                      </svg>
                    )}
                  </th>
                ))}
              </tr>
            </thead>
            <tbody>
              {orders.map((row, n) => {
                const active = n === orders.length - 1;
                return (
                  <tr
                    key={row[0]}
                    className={`odd:h-[15px] even:h-[16px] ${
                      active ? "bg-[#0a246a] text-white" : "text-black odd:bg-white even:bg-[#e9e9e9]"
                    }`}
                  >
                    {row.map((cell, i) => (
                      <td
                        key={i}
                        className={`border-r border-b border-[#cfcfcf] ${i === 0 ? "pl-[2px] text-left" : "pr-[2px]"} ${
                          active && i === 7 ? "bg-[#5af05a] text-black" : ""
                        }`}
                      >
                        {i === 0 ? (
                          <span className="flex items-center gap-[3px]">
                            <OrderIcon sell={row[2] === "sell"} />
                            {cell}
                          </span>
                        ) : i === 11 ? (
                          <span className="flex items-center justify-end gap-[7px] pr-px">
                            {cell}
                            <button type="button" aria-label="Закрыть ордер" className="text-[#777]">
                              <CrossMark />
                            </button>
                          </span>
                        ) : (
                          cell
                        )}
                      </td>
                    ))}
                  </tr>
                );
              })}
              <tr className="h-[15px] bg-[#c8c8c8] text-[9px] font-bold text-black">
                <td colSpan={11} className="pl-[2px] text-left">
                  <span className="flex items-center gap-[4px] whitespace-pre">
                    <span className="flex size-[11px] items-center justify-center border border-[#888] bg-[#eee]">
                      <Quote up={false} />
                    </span>
                    Баланс: 9 905.87 USD  Средства: 9 859.50  Маржа: 26.61  Свободная маржа: 9 832.89  Уровень: 37050.19%
                  </span>
                </td>
                <td className="pr-[18px]">-46.37</td>
                <td />
              </tr>
            </tbody>
          </table>
        </div>
        <div className="flex h-[16px] border-t border-[#404040] leading-[13px]">
          {terminalTabs.map(([name, count]) => (
            <button
              key={name}
              type="button"
              onClick={() => setTab(name)}
              className={
                tab === name
                  ? "-mt-px mb-px border border-t-0 border-[#404040] bg-white px-[8px] text-black"
                  : "my-[2px] flex items-center border-r border-[#808080] px-[8px] text-[#555]"
              }
            >
              {name}
              {count && <b className="relative top-[3px] pl-px text-[#f03030]">{count}</b>}
            </button>
          ))}
        </div>
      </div>
    </section>
  );
}

function StatusBar() {
  return (
    <footer className="mt-[2px] flex h-[20px] items-center border-t border-[#9a978f] pl-[2px]">
      <span className="flex-1">Для вызова справки нажмите F1</span>
      {["w-[90px]", "w-[79px]", "w-[56px]", "w-[56px]", "w-[54px]", "w-[56px]", "w-[54px]"].map((w, i) => (
        <span key={i} className={`h-[14px] border-l border-[#9a978f] ${w}`} />
      ))}
      <div className="flex h-[14px] w-[95px] items-center gap-[3px] border-l-2 border-[#9a978f] pl-[2px]">
        <svg viewBox="0 0 16 10" className="h-[10px] w-[16px]" aria-hidden="true">
          <path d="M0 0h16v1L0 7z" fill="#b4be78" />
          <path d="M0 8.500 16 2v8H0z" fill="#7896a0" />
          <path d="M.5 0v7M2.5 0v6.5M4.5 0v6M6.5 0v5M8.5 0v4M10.5 0v3M12.5 0v2M14.5 0v1" stroke="#7f9a1c" />
          <path d="M.5 8v2M2.5 7.5V10M4.5 7v3M6.5 6v4M8.5 5v5M10.5 4v6M12.5 3v7M14.5 2v8" stroke="#1c5a7a" />
        </svg>
        14121/44 kb
      </div>
    </footer>
  );
}

export default function App() {
  return (
    <div className="flex min-h-screen w-full flex-col bg-[#d4d0c8] font-['DejaVu_Sans_Condensed','DejaVu_Sans',sans-serif] text-[8px] leading-[10px] text-[#111]">
      <header className="flex h-[14px] items-center justify-between bg-linear-to-r from-[#0a246a] to-[#a6caf0] pl-[2px] text-white">
        <h1 className="flex items-center gap-[2px] text-[9px] font-bold">
          <Icon className="size-[12px]">{icons.logo}</Icon>
          1235221097: EGlobal-Demo - Демо Счет - [EURUSD,M1]
        </h1>
        <WindowButtons />
      </header>
      <MenuBar />
      <Toolbars />

      <div className="flex pt-px pb-px">
        <aside className="flex w-[151px] shrink-0 flex-col gap-[3px] pr-px">
          <MarketWatch />
          <Navigator />
        </aside>
        <ChartWindow />
      </div>

      <Terminal />
      <StatusBar />
    </div>
  );
}
